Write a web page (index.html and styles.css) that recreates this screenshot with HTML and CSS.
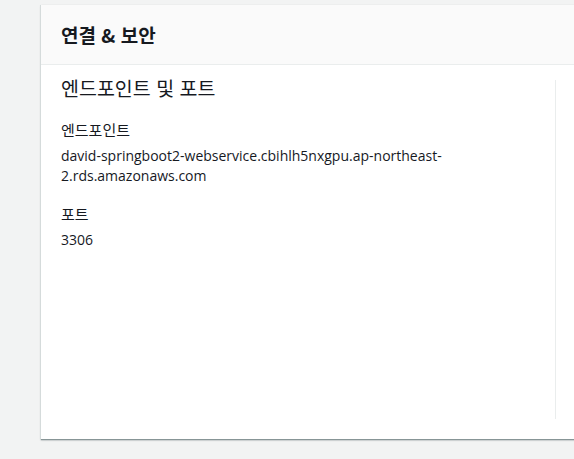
FILE: index.html
```html
<!DOCTYPE html>
<html lang="ko">
<head>
<meta charset="utf-8">
<link rel="stylesheet" href="styles.css">
</head>
<body>
<div class="page">
  <div class="rail"></div>
  <section class="card">
    <header class="card-header">
      <h2 class="card-title">연결 &amp; 보안</h2>
    </header>
    <div class="card-body">
      <div class="column">
        <h3 class="section-title">엔드포인트 및 포트</h3>
        <div class="field">
          <div class="label">엔드포인트</div>
          <div class="value">david-springboot2-webservice.cbihlh5nxgpu.ap-northeast-2.rds.amazonaws.com</div>
        </div>
        <div class="field">
          <div class="label">포트</div>
          <div class="value">3306</div>
        </div>
      </div>
      <div class="column column-right"></div>
    </div>
  </section>
</div>
</body>
</html>
```
FILE: styles.css
```css
html, body {
  margin: 0;
  padding: 0;
  background: #f2f3f3;
  overflow: hidden;
}
.page {
  display: flex;
  height: 459px;
  font-family: "Open Sans", "Noto Sans CJK KR", sans-serif;
  color: #16191f;
}
.rail {
  width: 1px;
  margin-left: 1px;
  background: #dfe2e2;
}
.card {
  margin-left: 40px;
  margin-top: 5px;
  width: 560px;
  flex: none;
  height: 434px;
  background: #fff;
  box-shadow: -1px 0 0 #d5dbdb, 0 1px 1px #879596, 0 1px 2px rgba(0,28,36,0.3);
  display: flex;
  flex-direction: column;
}
.card-header {
  height: 59px;
  background: #fafafa;
  border-bottom: 1px solid #eaeded;
  display: flex;
  align-items: center;
  padding: 0 20px;
}
.card-title {
  margin: 0;
  font-size: 19px;
  font-weight: 700;
  font-family: "Noto Sans CJK KR", sans-serif;
  line-height: 24px;
}
.card-body {
  flex: 1;
  display: flex;
  padding: 15px 20px 20px;
}
.column {
  box-sizing: border-box;
  width: 495px;
  flex: none;
  padding-right: 20px;
  border-right: 1px solid #eaeded;
}
.column-right {
  border-right: none;
  width: 40px;
}
.section-title {
  margin: -5px 0 19px;
  font-size: 19.5px;
  font-weight: 400;
  line-height: 26px;
  font-family: "Noto Sans CJK KR", sans-serif;
}
.field {
  margin-bottom: 18px;
}
.label {
  font-size: 15px;
  line-height: 20px;
  margin-bottom: 6px;
  font-family: "Noto Sans CJK KR", sans-serif;
}
.value {
  font-size: 14px;
  line-height: 20px;
}
```
